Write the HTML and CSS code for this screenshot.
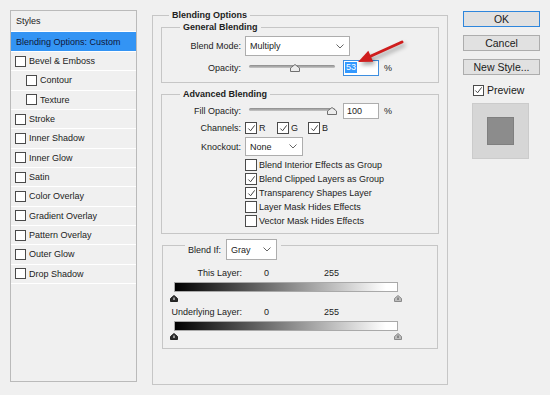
FILE: index.html
```html
<!DOCTYPE html>
<html lang="en">
<head>
    <meta charset="UTF-8">
    <title>Layer Style</title>
    <link rel="stylesheet" href="styles.css">
</head>
<body>
<div class="dialog">

    <!-- left: list of styles -->
    <div class="styles-list">
        <div class="list-head">Styles</div>
        <div class="list-item active">Blending Options: Custom</div>
        <div class="list-item"><span class="check"></span>Bevel &amp; Emboss</div>
        <div class="list-item sub"><span class="check"></span>Contour</div>
        <div class="list-item sub"><span class="check"></span>Texture</div>
        <div class="list-item"><span class="check"></span>Stroke</div>
        <div class="list-item"><span class="check"></span>Inner Shadow</div>
        <div class="list-item"><span class="check"></span>Inner Glow</div>
        <div class="list-item"><span class="check"></span>Satin</div>
        <div class="list-item"><span class="check"></span>Color Overlay</div>
        <div class="list-item"><span class="check"></span>Gradient Overlay</div>
        <div class="list-item"><span class="check"></span>Pattern Overlay</div>
        <div class="list-item"><span class="check"></span>Outer Glow</div>
        <div class="list-item"><span class="check"></span>Drop Shadow</div>
    </div>

    <!-- middle: blending options -->
    <div class="group main-group">
        <div class="group-title main-title">Blending Options</div>

        <div class="group general">
            <div class="group-title">General Blending</div>
            <div class="row r-mode">
                <span class="lbl">Blend Mode:</span>
                <div class="select w-mode">Multiply<svg viewBox="0 0 8 5"><path d="M0.5 0.5 L4 4 L7.5 0.5"/></svg></div>
            </div>
            <div class="row r-opacity">
                <span class="lbl">Opacity:</span>
                <div class="slider">
                    <span class="thumb" style="left: 53%"><svg viewBox="0 0 10 8"><path d="M0.5 7.5 V4 L5 0.5 L9.5 4 V7.5 Z"/></svg></span>
                </div>
                <div class="num focus"><span class="sel">53</span></div>
                <span class="pct">%</span>
            </div>
        </div>

        <div class="group advanced">
            <div class="group-title">Advanced Blending</div>
            <div class="row r-fill">
                <span class="lbl">Fill Opacity:</span>
                <div class="slider">
                    <span class="thumb" style="left: 97%"><svg viewBox="0 0 10 8"><path d="M0.5 7.5 V4 L5 0.5 L9.5 4 V7.5 Z"/></svg></span>
                </div>
                <div class="num">100</div>
                <span class="pct">%</span>
            </div>
            <div class="row r-channels">
                <span class="lbl">Channels:</span>
                <span class="chan"><span class="check"><svg viewBox="0 0 10 10"><path d="M1.5 5 L4 7.5 L8.5 1.5"/></svg></span>R</span>
                <span class="chan g"><span class="check"><svg viewBox="0 0 10 10"><path d="M1.5 5 L4 7.5 L8.5 1.5"/></svg></span>G</span>
                <span class="chan"><span class="check"><svg viewBox="0 0 10 10"><path d="M1.5 5 L4 7.5 L8.5 1.5"/></svg></span>B</span>
            </div>
            <div class="row r-knock">
                <span class="lbl">Knockout:</span>
                <div class="select w-knock">None<svg viewBox="0 0 8 5"><path d="M0.5 0.5 L4 4 L7.5 0.5"/></svg></div>
            </div>
            <div class="opts">
                <div class="opt"><span class="check"></span>Blend Interior Effects as Group</div>
                <div class="opt"><span class="check"><svg viewBox="0 0 10 10"><path d="M1.5 5 L4 7.5 L8.5 1.5"/></svg></span>Blend Clipped Layers as Group</div>
                <div class="opt"><span class="check"><svg viewBox="0 0 10 10"><path d="M1.5 5 L4 7.5 L8.5 1.5"/></svg></span>Transparency Shapes Layer</div>
                <div class="opt"><span class="check"></span>Layer Mask Hides Effects</div>
                <div class="opt"><span class="check"></span>Vector Mask Hides Effects</div>
            </div>
        </div>

        <div class="group blendif">
            <div class="blendif-title">
                <span>Blend If:</span>
                <div class="select w-gray">Gray<svg viewBox="0 0 8 5"><path d="M0.5 0.5 L4 4 L7.5 0.5"/></svg></div>
            </div>
            <div class="layer-row first">
                <span class="lbl">This Layer:</span>
                <span class="lo">0</span>
                <span class="hi">255</span>
            </div>
            <div class="bar"></div>
            <div class="thumbs">
                <svg class="dark" viewBox="0 0 8 7"><path d="M0.5 6.5 V3.5 L4 0.5 L7.5 3.5 V6.5 Z"/><path class="mark" d="M4 2.5 V5"/></svg>
                <svg class="light" viewBox="0 0 8 7"><path d="M0.5 6.5 V3.5 L4 0.5 L7.5 3.5 V6.5 Z"/><path class="mark" d="M4 2.5 V5"/></svg>
            </div>
            <div class="layer-row">
                <span class="lbl">Underlying Layer:</span>
                <span class="lo">0</span>
                <span class="hi">255</span>
            </div>
            <div class="bar second"></div>
            <div class="thumbs second">
                <svg class="dark" viewBox="0 0 8 7"><path d="M0.5 6.5 V3.5 L4 0.5 L7.5 3.5 V6.5 Z"/><path class="mark" d="M4 2.5 V5"/></svg>
                <svg class="light" viewBox="0 0 8 7"><path d="M0.5 6.5 V3.5 L4 0.5 L7.5 3.5 V6.5 Z"/><path class="mark" d="M4 2.5 V5"/></svg>
            </div>
        </div>
    </div>

    <!-- right: buttons and preview -->
    <div class="side">
        <div class="btn default">OK</div>
        <div class="btn">Cancel</div>
        <div class="btn">New Style...</div>
        <div class="preview"><span class="check"><svg viewBox="0 0 10 10"><path d="M1.5 5 L4 7.5 L8.5 1.5"/></svg></span>Preview</div>
        <div class="swatch"><span></span></div>
    </div>

    <!-- annotation arrow pointing at the opacity field -->
    <svg class="arrow" viewBox="0 0 60 35">
        <path class="shaft" d="M52 7 L21 21"/>
        <path class="head" d="M8 27 L23.2 26.7 L18.3 15.7 Z"/>
    </svg>
</div>
</body>
</html>
```

FILE: styles.css
```css
body {
    margin: 0;
    background: #f0f0f0;
    font-family: "Liberation Sans", Arial, sans-serif;
    font-size: 9px;
    color: #222;
}
.dialog {
    position: relative;
    display: flex;
    align-items: flex-start;
    width: 550px;
    height: 395px;
    padding: 10px 0 0 10px;
    box-sizing: border-box;
    overflow: hidden;
}

/* checkboxes */
.check {
    display: flex;
    align-items: center;
    justify-content: center;
    width: 11px;
    height: 11px;
    box-sizing: border-box;
    border: 1px solid #4a4a4a;
    background: #fff;
    margin-right: 3px;
    flex-shrink: 0;
}
.check svg {
    width: 9px;
    height: 9px;
    fill: none;
    stroke: #444;
    stroke-width: 1.1;
}

/* styles list */
.styles-list {
    width: 127px;
    height: 372px;
    box-sizing: border-box;
    border: 1px solid #bababa;
    flex-shrink: 0;
}
.list-head {
    height: 21px;
    line-height: 20px;
    padding-left: 5px;
    box-sizing: border-box;
    border-bottom: 1px solid #fff;
}
.list-item {
    display: flex;
    align-items: center;
    height: 19.33px;
    box-sizing: border-box;
    border-bottom: 1px solid #fff;
    padding-left: 4px;
}
.list-item.active {
    height: 20px;
    padding-left: 5px;
    background: #3394f4;
    color: #10163a;
}
.list-item.sub {
    padding-left: 15px;
}

/* group boxes */
.group {
    border: 1px solid #c6c6c6;
    box-sizing: border-box;
}
.group-title {
    width: fit-content;
    height: 12px;
    line-height: 12px;
    margin: -7px 0 0 18px;
    padding: 0 3px;
    background: #f0f0f0;
    font-weight: bold;
}
.main-group {
    width: 296px;
    height: 370px;
    margin: 5px 0 0 15px;
    padding: 0 8px;
    flex-shrink: 0;
}
.main-title {
    margin-left: 8px;
}
.general {
    margin-top: 6px;
    padding-bottom: 6px;
}
.advanced {
    margin-top: 11px;
    padding-bottom: 5px;
}

.row {
    display: flex;
    align-items: center;
}
.lbl {
    width: 79px;
    margin-right: 4px;
    text-align: right;
    flex-shrink: 0;
}
.select {
    display: flex;
    align-items: center;
    justify-content: space-between;
    height: 100%;
    box-sizing: border-box;
    padding: 0 5px 0 4px;
    border: 1px solid #adadad;
    background: #fff;
}
.select svg {
    width: 8px;
    height: 5px;
    fill: none;
    stroke: #666;
}
.w-mode { width: 105px; }
.w-knock { width: 58px; }

.r-mode {
    height: 20px;
    margin-top: 3px;
}
.r-opacity {
    height: 17px;
    margin-top: 3px;
}
.r-fill {
    height: 17px;
    margin-top: 2px;
}
.r-channels {
    height: 16px;
    margin-top: 1px;
}
.r-knock {
    height: 19px;
    margin-top: 1px;
}

.slider {
    position: relative;
    align-self: flex-start;
    width: 86px;
    height: 3px;
    margin: 6px 0 0 4px;
    border-radius: 2px;
    background: linear-gradient(#8a8a8a, #c8c8c8);
}
.thumb {
    position: absolute;
    top: -1px;
    width: 10px;
    height: 8px;
    margin-left: -5px;
}
.thumb svg {
    display: block;
    width: 10px;
    height: 8px;
    fill: #ececec;
    stroke: #707070;
}
.num {
    display: flex;
    align-items: center;
    width: 36px;
    height: 16px;
    box-sizing: border-box;
    margin-left: 8px;
    padding-left: 3px;
    border: 1px solid #adadad;
    background: #fff;
}
.num.focus {
    border-color: #3d8ee0;
    padding-left: 1px;
}
.sel {
    padding: 0 1px;
    line-height: 11px;
    background: #3399ff;
    color: #fff;
}
.pct {
    margin-left: 5px;
}

.chan {
    display: flex;
    align-items: center;
    width: 32px;
}
.chan.g { width: 31px; }
.chan .check {
    width: 12px;
    height: 12px;
    margin-right: 2px;
}

.opts {
    margin: 2px 0 0 83px;
}
.opt {
    display: flex;
    align-items: center;
    height: 14px;
}
.opt .check {
    width: 12px;
    height: 12px;
    margin-right: 2px;
}

/* blend if */
.blendif {
    width: 276px;
    margin: 11px 0 0 1px;
    padding-bottom: 8px;
}
.blendif-title {
    display: flex;
    align-items: center;
    width: fit-content;
    height: 21px;
    margin: -7px 0 0 22px;
    padding: 0 4px 0 3px;
    background: #f0f0f0;
}
.w-gray {
    width: 51px;
    margin-left: 5px;
}
.layer-row {
    display: flex;
    align-items: center;
    height: 14px;
    margin-top: 3px;
}
.layer-row.first {
    margin-top: 6px;
}
.layer-row .lbl {
    margin-right: 0;
}
.lo { margin-left: 22px; }
.hi { margin-left: 55px; }
.bar {
    width: 224px;
    height: 10px;
    box-sizing: border-box;
    margin: 2px 0 0 11px;
    border: 1px solid #a9a9a9;
    background: linear-gradient(to right, #000, #777 45%, #fff 95%);
}
.thumbs {
    display: flex;
    justify-content: space-between;
    width: 232px;
    height: 7px;
    margin: 3px 0 0 7px;
}
.thumbs.second {
    margin-top: 2px;
}
.thumbs svg {
    width: 8px;
    height: 7px;
}
.thumbs .dark path { fill: #2a2a2a; stroke: #222; }
.thumbs .light path { fill: #bdbdbd; stroke: #8a8a8a; }
.thumbs .dark .mark { stroke: #fff; fill: none; }
.thumbs .light .mark { stroke: #555; fill: none; }

/* right column */
.side {
    display: flex;
    flex-direction: column;
    width: 77px;
    margin: 1px 0 0 15px;
    font-size: 10.5px;
    color: #1a1a1a;
}
.btn {
    display: flex;
    align-items: center;
    justify-content: center;
    height: 16px;
    box-sizing: border-box;
    margin-bottom: 8px;
    border: 1px solid #adadad;
    background: #e1e1e1;
}
.btn.default {
    border-color: #2e86dc;
}
.preview {
    display: flex;
    align-items: center;
    height: 14px;
    margin: 0 0 6px 10px;
}
.swatch {
    display: flex;
    align-items: center;
    justify-content: center;
    width: 57px;
    height: 56px;
    box-sizing: border-box;
    margin-left: 9px;
    border: 1px solid #cbcbcb;
    background: #d6d6d6;
}
.swatch span {
    width: 27px;
    height: 28px;
    box-sizing: border-box;
    border: 1px solid #7f7f7f;
    background: #8c8c8c;
}

/* red annotation arrow */
.arrow {
    position: absolute;
    left: 350px;
    top: 35px;
    width: 60px;
    height: 35px;
    filter: drop-shadow(2px 3px 2px rgba(0, 0, 0, 0.35));
}
.arrow .shaft {
    stroke: #cf1d1d;
    stroke-width: 3;
    stroke-linecap: round;
    fill: none;
}
.arrow .head {
    fill: #cf1d1d;
}
```
